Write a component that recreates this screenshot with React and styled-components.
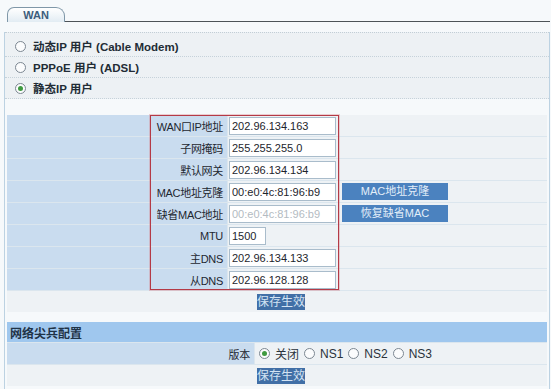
import styled, { createGlobalStyle } from "styled-components";

const GlobalStyle = createGlobalStyle`
	body {
		margin: 0;
		background: #f6f9fb;
		font-family: "Liberation Sans", "Noto Sans CJK SC", sans-serif;
		font-size: 12px;
		color: #1f2a33;
	}
`;

const ipFields = [
	{ label: "WAN口IP地址", value: "202.96.134.163" },
	{ label: "子网掩码", value: "255.255.255.0" },
	{ label: "默认网关", value: "202.96.134.134" },
	{ label: "MAC地址克隆", value: "00:e0:4c:81:96:b9", button: "MAC地址克隆" },
	{ label: "缺省MAC地址", value: "00:e0:4c:81:96:b9", button: "恢复缺省MAC", disabled: true },
	{ label: "MTU", value: "1500", short: true },
	{ label: "主DNS", value: "202.96.134.133" },
	{ label: "从DNS", value: "202.96.128.128" },
];

const modes = [
	{ text: "动态IP 用户 (Cable Modem)" },
	{ text: "PPPoE 用户 (ADSL)" },
	{ text: "静态IP 用户", checked: true },
];

export default function App() {
	return (
		<Page>
			<GlobalStyle />
			<TabBar>
				<Tab>WAN</Tab>
				<TabLine />
			</TabBar>
			<Panel>
				<ModeList>
					{modes.map((m) => (
						<ModeRow key={m.text}>
							<Radio $checked={m.checked} />
							<span>{m.text}</span>
						</ModeRow>
					))}
				</ModeList>

				<FormArea>
					<Grid $labelWidth={220}>
						{ipFields.map((f) => (
							<Row key={f.label}>
								<Label>{f.label}</Label>
								<Value>
									<Input
										readOnly
										value={f.value}
										$short={f.short}
										$disabled={f.disabled}
									/>
									{f.button && <BlueButton>{f.button}</BlueButton>}
								</Value>
							</Row>
						))}
						<SaveRow>
							<SaveButton>保存生效</SaveButton>
						</SaveRow>
					</Grid>
					<Highlight />
				</FormArea>

				<SectionHeader>网络尖兵配置</SectionHeader>
				<Grid $labelWidth={247}>
					<Row>
						<Label>版本</Label>
						<Value>
							<Options>
								<Option>
									<Radio $checked />
									关闭
								</Option>
								<Option>
									<Radio />
									NS1
								</Option>
								<Option>
									<Radio />
									NS2
								</Option>
								<Option>
									<Radio />
									NS3
								</Option>
							</Options>
						</Value>
					</Row>
					<SaveRow>
						<SaveButton>保存生效</SaveButton>
					</SaveRow>
				</Grid>
			</Panel>
		</Page>
	);
}

const Page = styled.div`
	padding: 6px 1px 0 4px;
	height: 389px;
	box-sizing: border-box;
	overflow: hidden;
`;

const TabBar = styled.div`
	display: flex;
	align-items: flex-end;
	padding-left: 3px;
	height: 16px;
`;

const Tab = styled.div`
	width: 58px;
	height: 15px;
	box-sizing: border-box;
	border: 1px solid #7f97a8;
	border-bottom: none;
	border-radius: 7px 9px 0 0;
	background: linear-gradient(#ffffff, #e2ecf3);
	color: #3d5d7c;
	font-weight: bold;
	font-size: 11px;
	line-height: 14px;
	text-align: center;
`;

const TabLine = styled.div`
	flex: 1;
	border-bottom: 1px solid #4d5358;
`;

const Panel = styled.div`
	border-left: 1px solid #bcd2e2;
	border-right: 1px solid #bcd2e2;
	padding: 0 2px;
	height: 400px;
`;

const ModeList = styled.div`
	margin: 10px -2px 0;
	padding-top: 3px;
	border-top: 1px dotted #c2ced6;
	background: #edf1f4;
`;

const ModeRow = styled.div`
	display: flex;
	align-items: center;
	height: 20px;
	padding-left: 10px;
	gap: 7px;
	border-bottom: 1px dotted #c6d2da;
	font-weight: bold;
	font-size: 11.5px;
	color: #222c35;
`;

const Radio = styled.span`
	position: relative;
	display: inline-block;
	width: 9px;
	height: 9px;
	border-radius: 50%;
	border: 1px solid #7c8792;
	background: #fbfcfd;
	flex-shrink: 0;

	&::after {
		content: "";
		display: ${({ $checked }) => ($checked ? "block" : "none")};
		position: absolute;
		left: 2px;
		top: 2px;
		width: 5px;
		height: 5px;
		border-radius: 50%;
		background: #3f9a40;
	}
`;

const FormArea = styled.div`
	position: relative;
	margin-top: 16px;
`;

const Grid = styled.div`
	display: grid;
	grid-template-columns: ${({ $labelWidth }) => $labelWidth}px 1fr;
	grid-auto-rows: 21px;
	gap: 1px;
	background: #dbe6ee;
`;

const Row = styled.div`
	display: contents;
`;

const Label = styled.div`
	background: #c9dcef;
	display: flex;
	align-items: center;
	justify-content: flex-end;
	padding-right: 4px;
	font-size: 11px;
	letter-spacing: -0.3px;
	color: #1e2730;
`;

const Value = styled.div`
	background: #eef2f5;
	display: flex;
	align-items: center;
	gap: 6px;
	padding-left: 1px;
`;

const Input = styled.input`
	width: ${({ $short }) => ($short ? 37 : 107)}px;
	height: 18px;
	box-sizing: border-box;
	border: 1px solid #a9bccb;
	background: #ffffff;
	padding: 0 2px;
	font-family: "Liberation Sans", sans-serif;
	font-size: 11px;
	color: ${({ $disabled }) => ($disabled ? "#b3bbc2" : "#1d252c")};
	outline: none;
`;

const BlueButton = styled.div`
	width: 106px;
	height: 17px;
	background: #4b82bf;
	color: #e3eef9;
	font-size: 11px;
	line-height: 17px;
	text-align: center;
`;

const SaveRow = styled.div`
	grid-column: 1 / -1;
	background: #eef2f5;
	display: flex;
	align-items: center;
	padding-left: 250px;
`;

const SaveButton = styled.div`
	width: 48px;
	height: 16px;
	background: #416fa6;
	color: #d3e3f3;
	font-size: 12px;
	line-height: 16px;
	text-align: center;
`;

const Highlight = styled.div`
	position: absolute;
	left: 143px;
	top: 0;
	width: 189px;
	height: 175px;
	box-sizing: border-box;
	border: 1px solid #b43a46;
	box-shadow: 0 0 0 1px rgba(214, 120, 130, 0.35);
	pointer-events: none;
`;

const SectionHeader = styled.div`
	margin-top: 10px;
	height: 20px;
	background: #9fc7ee;
	padding-left: 3px;
	display: flex;
	align-items: center;
	font-weight: bold;
	font-size: 12px;
	color: #1f3347;
	border-bottom: 1px solid #dbe6ee;
`;

const Options = styled.div`
	display: flex;
	align-items: center;
	gap: 5px;
	padding-left: 3px;
	font-size: 12px;
	color: #2a333b;
`;

const Option = styled.label`
	display: flex;
	align-items: center;
	gap: 5px;
`;
